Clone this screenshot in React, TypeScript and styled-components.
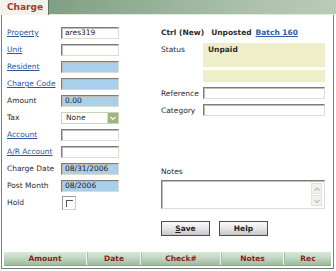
import React from "react";
import styled, { createGlobalStyle } from "styled-components";

const GlobalStyle = createGlobalStyle`
  body {
    margin: 0;
    background: #fff;
    font-family: "DejaVu Sans", Verdana, sans-serif;
    font-size: 7.5px;
    color: #2c2c2c;
  }
`;

const Frame = styled.div`
  width: 336px;
  height: 271px;
  display: flex;
  flex-direction: column;
  overflow: hidden;
  background: #fff;
`;

const TabBar = styled.div`
  display: flex;
  height: 15px;
  flex-shrink: 0;
`;

const Tab = styled.div`
  width: 41px;
  padding-left: 7px;
  background: #f3f1ec;
  border-right: 1px solid #5d765d;
  color: #a53636;
  font-weight: bold;
  font-size: 9px;
  line-height: 15px;
`;

const TabFill = styled.div`
  flex: 1;
  background: linear-gradient(to right, #80a082, #acc1ab 70%, #bacbb8);
  border-bottom: 1px solid #e4ebe3;
`;

const Panel = styled.div`
  flex: 1;
  display: flex;
  flex-direction: column;
  margin: 0 2px 2px 1px;
  border: 1px solid #7d7d7d;
  border-top: none;
`;

const Body = styled.div`
  display: flex;
  padding: 9px 0 0 5px;
  gap: 42px;
`;

const FieldGrid = styled.div`
  display: grid;
  grid-template-columns: 54px 58px;
  grid-auto-rows: 17px;
  align-items: center;
`;

const Label = styled.span<{ $link?: boolean }>`
  color: ${(p) => (p.$link ? "#2f55a0" : "#2c2c2c")};
  text-decoration: ${(p) => (p.$link ? "underline" : "none")};
  white-space: nowrap;
`;

const Input = styled.div<{ $filled?: boolean; $w?: number }>`
  box-sizing: border-box;
  width: ${(p) => (p.$w ? `${p.$w}px` : "58px")};
  height: 12px;
  padding-left: 3px;
  line-height: 10px;
  background: ${(p) => (p.$filled ? "#a9cfea" : "#fff")};
  border: 1px solid;
  border-color: #7c7c7c #dcdcd2 #dcdcd2 #7c7c7c;
  box-shadow: inset 1px 1px 0 #bdbdb5;
  color: #1a1a1a;
  white-space: nowrap;
`;

const Select = styled.div`
  box-sizing: border-box;
  width: 58px;
  height: 12px;
  display: flex;
  align-items: center;
  padding-left: 4px;
  border: 1px solid #c9d3b8;
  background: #fff;
`;

const SelectText = styled.span`
  flex: 1;
  line-height: 10px;
`;

const SelectArrow = styled.div`
  width: 10px;
  height: 10px;
  background: #9cb67e;
  border-left: 1px solid #d8e2c8;
  display: flex;
  align-items: center;
  justify-content: center;
`;

const Check = styled.div`
  box-sizing: border-box;
  width: 14px;
  height: 14px;
  margin-left: 1px;
  background: #fff;
  border: 1px solid;
  border-color: #9a9a9a #cfcfc8 #cfcfc8 #9a9a9a;
  position: relative;
  &::after {
    content: "";
    position: absolute;
    left: 3px;
    top: 3px;
    width: 6px;
    height: 6px;
    border-top: 1px solid #555;
    border-left: 1px solid #555;
  }
`;

const Side = styled.div`
  width: 164px;
  display: flex;
  flex-direction: column;
`;

const InfoRow = styled.div`
  height: 17px;
  display: flex;
  align-items: center;
  font-weight: bold;
  white-space: nowrap;
`;

const Spaced = styled.span`
  margin-left: 7px;
`;

const BatchLink = styled.span`
  margin-left: 4px;
  color: #2f5ca6;
  text-decoration: underline;
`;

const SideRow = styled.div<{ $top: number; $align?: string }>`
  display: flex;
  align-items: ${(p) => p.$align || "center"};
  margin-top: ${(p) => p.$top}px;
`;

const SideLabel = styled.span<{ $pad?: number }>`
  width: 42px;
  flex-shrink: 0;
  padding-top: ${(p) => p.$pad || 0}px;
  white-space: nowrap;
`;

const StatusBox = styled.div<{ $h: number }>`
  box-sizing: border-box;
  width: 122px;
  height: ${(p) => p.$h}px;
  margin-left: ${(p) => (p.$h < 20 ? "42px" : "0")};
  background: #eeeecb;
  font-weight: bold;
  padding: 2px 5px;
`;

const NotesLabel = styled.div`
  margin-top: 51px;
  line-height: 10px;
`;

const NotesBox = styled.div`
  box-sizing: border-box;
  margin-top: 3px;
  width: 164px;
  height: 29px;
  display: flex;
  justify-content: flex-end;
  border: 1px solid;
  border-color: #7c7c7c #dcdcd2 #dcdcd2 #7c7c7c;
  box-shadow: inset 1px 1px 0 #bdbdb5;
  padding: 2px 2px 2px 0;
`;

const ScrollTrack = styled.div`
  width: 11px;
  display: flex;
  flex-direction: column;
  justify-content: space-between;
`;

const ScrollBtn = styled.div`
  height: 9px;
  background: #f1f1ee;
  border: 1px solid #e2e2dc;
  display: flex;
  align-items: center;
  justify-content: center;
`;

const Buttons = styled.div`
  display: flex;
  gap: 9px;
  margin-top: 12px;
`;

const Button = styled.div`
  box-sizing: border-box;
  width: 49px;
  height: 15px;
  border: 1px solid #4e4e4e;
  background: linear-gradient(#fafafa, #e6e6e6 50%, #c6c6c6);
  font-weight: bold;
  text-align: center;
  line-height: 13px;
  color: #222;
`;

const ColumnBar = styled.div`
  margin: auto 2px 2px 2px;
  height: 13px;
  display: flex;
  background: linear-gradient(#d9e7d8, #c3d8c3 45%, #9db99e);
  border-bottom: 1px solid #8aa68b;
`;

const ColumnHead = styled.div<{ $w?: number }>`
  ${(p) => (p.$w ? `width: ${p.$w}px;` : "flex: 1;")}
  box-sizing: border-box;
  text-align: center;
  line-height: 13px;
  font-weight: bold;
  color: #8c1c1c;
  border-right: 1px solid #eef4ee;
  border-left: 1px solid #a8c0a8;
  &:first-child {
    border-left: none;
  }
  &:last-child {
    border-right: none;
  }
`;

const Chevron = ({ up, color }: { up?: boolean; color: string }) => (
  <svg width="6" height="4" viewBox="0 0 6 4">
    <path
      d={up ? "M0.5 3.5 L3 1 L5.5 3.5" : "M0.5 0.8 L3 3.3 L5.5 0.8"}
      fill="none"
      stroke={color}
      strokeWidth="1.2"
    />
  </svg>
);

const fields: { label: string; link?: boolean; kind?: string; value?: string; filled?: boolean }[] = [
  { label: "Property", link: true, value: "ares319" },
  { label: "Unit", link: true },
  { label: "Resident", link: true, filled: true },
  { label: "Charge Code", link: true, filled: true },
  { label: "Amount", value: "0.00", filled: true },
  { label: "Tax", kind: "select", value: "None" },
  { label: "Account", link: true },
  { label: "A/R Account", link: true },
  { label: "Charge Date", value: "08/31/2006", filled: true },
  { label: "Post Month", value: "08/2006", filled: true },
  { label: "Hold", kind: "check" },
];

const columns = [
  { name: "Amount", w: 83 },
  { name: "Date", w: 54 },
  { name: "Check#", w: 80 },
  { name: "Notes", w: 63 },
  { name: "Rec" },
];

export default function App() {
  return (
    <>
      <GlobalStyle />
      <Frame>
        <TabBar>
          <Tab>Charge</Tab>
          <TabFill />
        </TabBar>
        <Panel>
          <Body>
            <FieldGrid>
              {fields.map((f) => (
                <React.Fragment key={f.label}>
                  <Label $link={f.link}>{f.label}</Label>
                  {f.kind === "select" ? (
                    <Select>
                      <SelectText>{f.value}</SelectText>
                      <SelectArrow>
                        <Chevron color="#fff" />
                      </SelectArrow>
                    </Select>
                  ) : f.kind === "check" ? (
                    <Check />
                  ) : (
                    <Input $filled={f.filled}>{f.value}</Input>
                  )}
                </React.Fragment>
              ))}
            </FieldGrid>
            <Side>
              <InfoRow>
                Ctrl (New)
                <Spaced>Unposted</Spaced>
                <BatchLink>Batch 160</BatchLink>
              </InfoRow>
              <SideRow $top={2} $align="flex-start">
                <SideLabel $pad={2}>Status</SideLabel>
                <StatusBox $h={24}>Unpaid</StatusBox>
              </SideRow>
              <SideRow $top={3}>
                <StatusBox $h={12} />
              </SideRow>
              <SideRow $top={5}>
                <SideLabel>Reference</SideLabel>
                <Input $w={122} />
              </SideRow>
              <SideRow $top={5}>
                <SideLabel>Category</SideLabel>
                <Input $w={122} />
              </SideRow>
              <NotesLabel>Notes</NotesLabel>
              <NotesBox>
                <ScrollTrack>
                  <ScrollBtn>
                    <Chevron up color="#b8b8b0" />
                  </ScrollBtn>
                  <ScrollBtn>
                    <Chevron color="#b8b8b0" />
                  </ScrollBtn>
                </ScrollTrack>
              </NotesBox>
              <Buttons>
                <Button>
                  <u>S</u>ave
                </Button>
                <Button>Help</Button>
              </Buttons>
            </Side>
          </Body>
          <ColumnBar>
            {columns.map((c) => (
              <ColumnHead key={c.name} $w={c.w}>
                {c.name}
              </ColumnHead>
            ))}
          </ColumnBar>
        </Panel>
      </Frame>
    </>
  );
}
